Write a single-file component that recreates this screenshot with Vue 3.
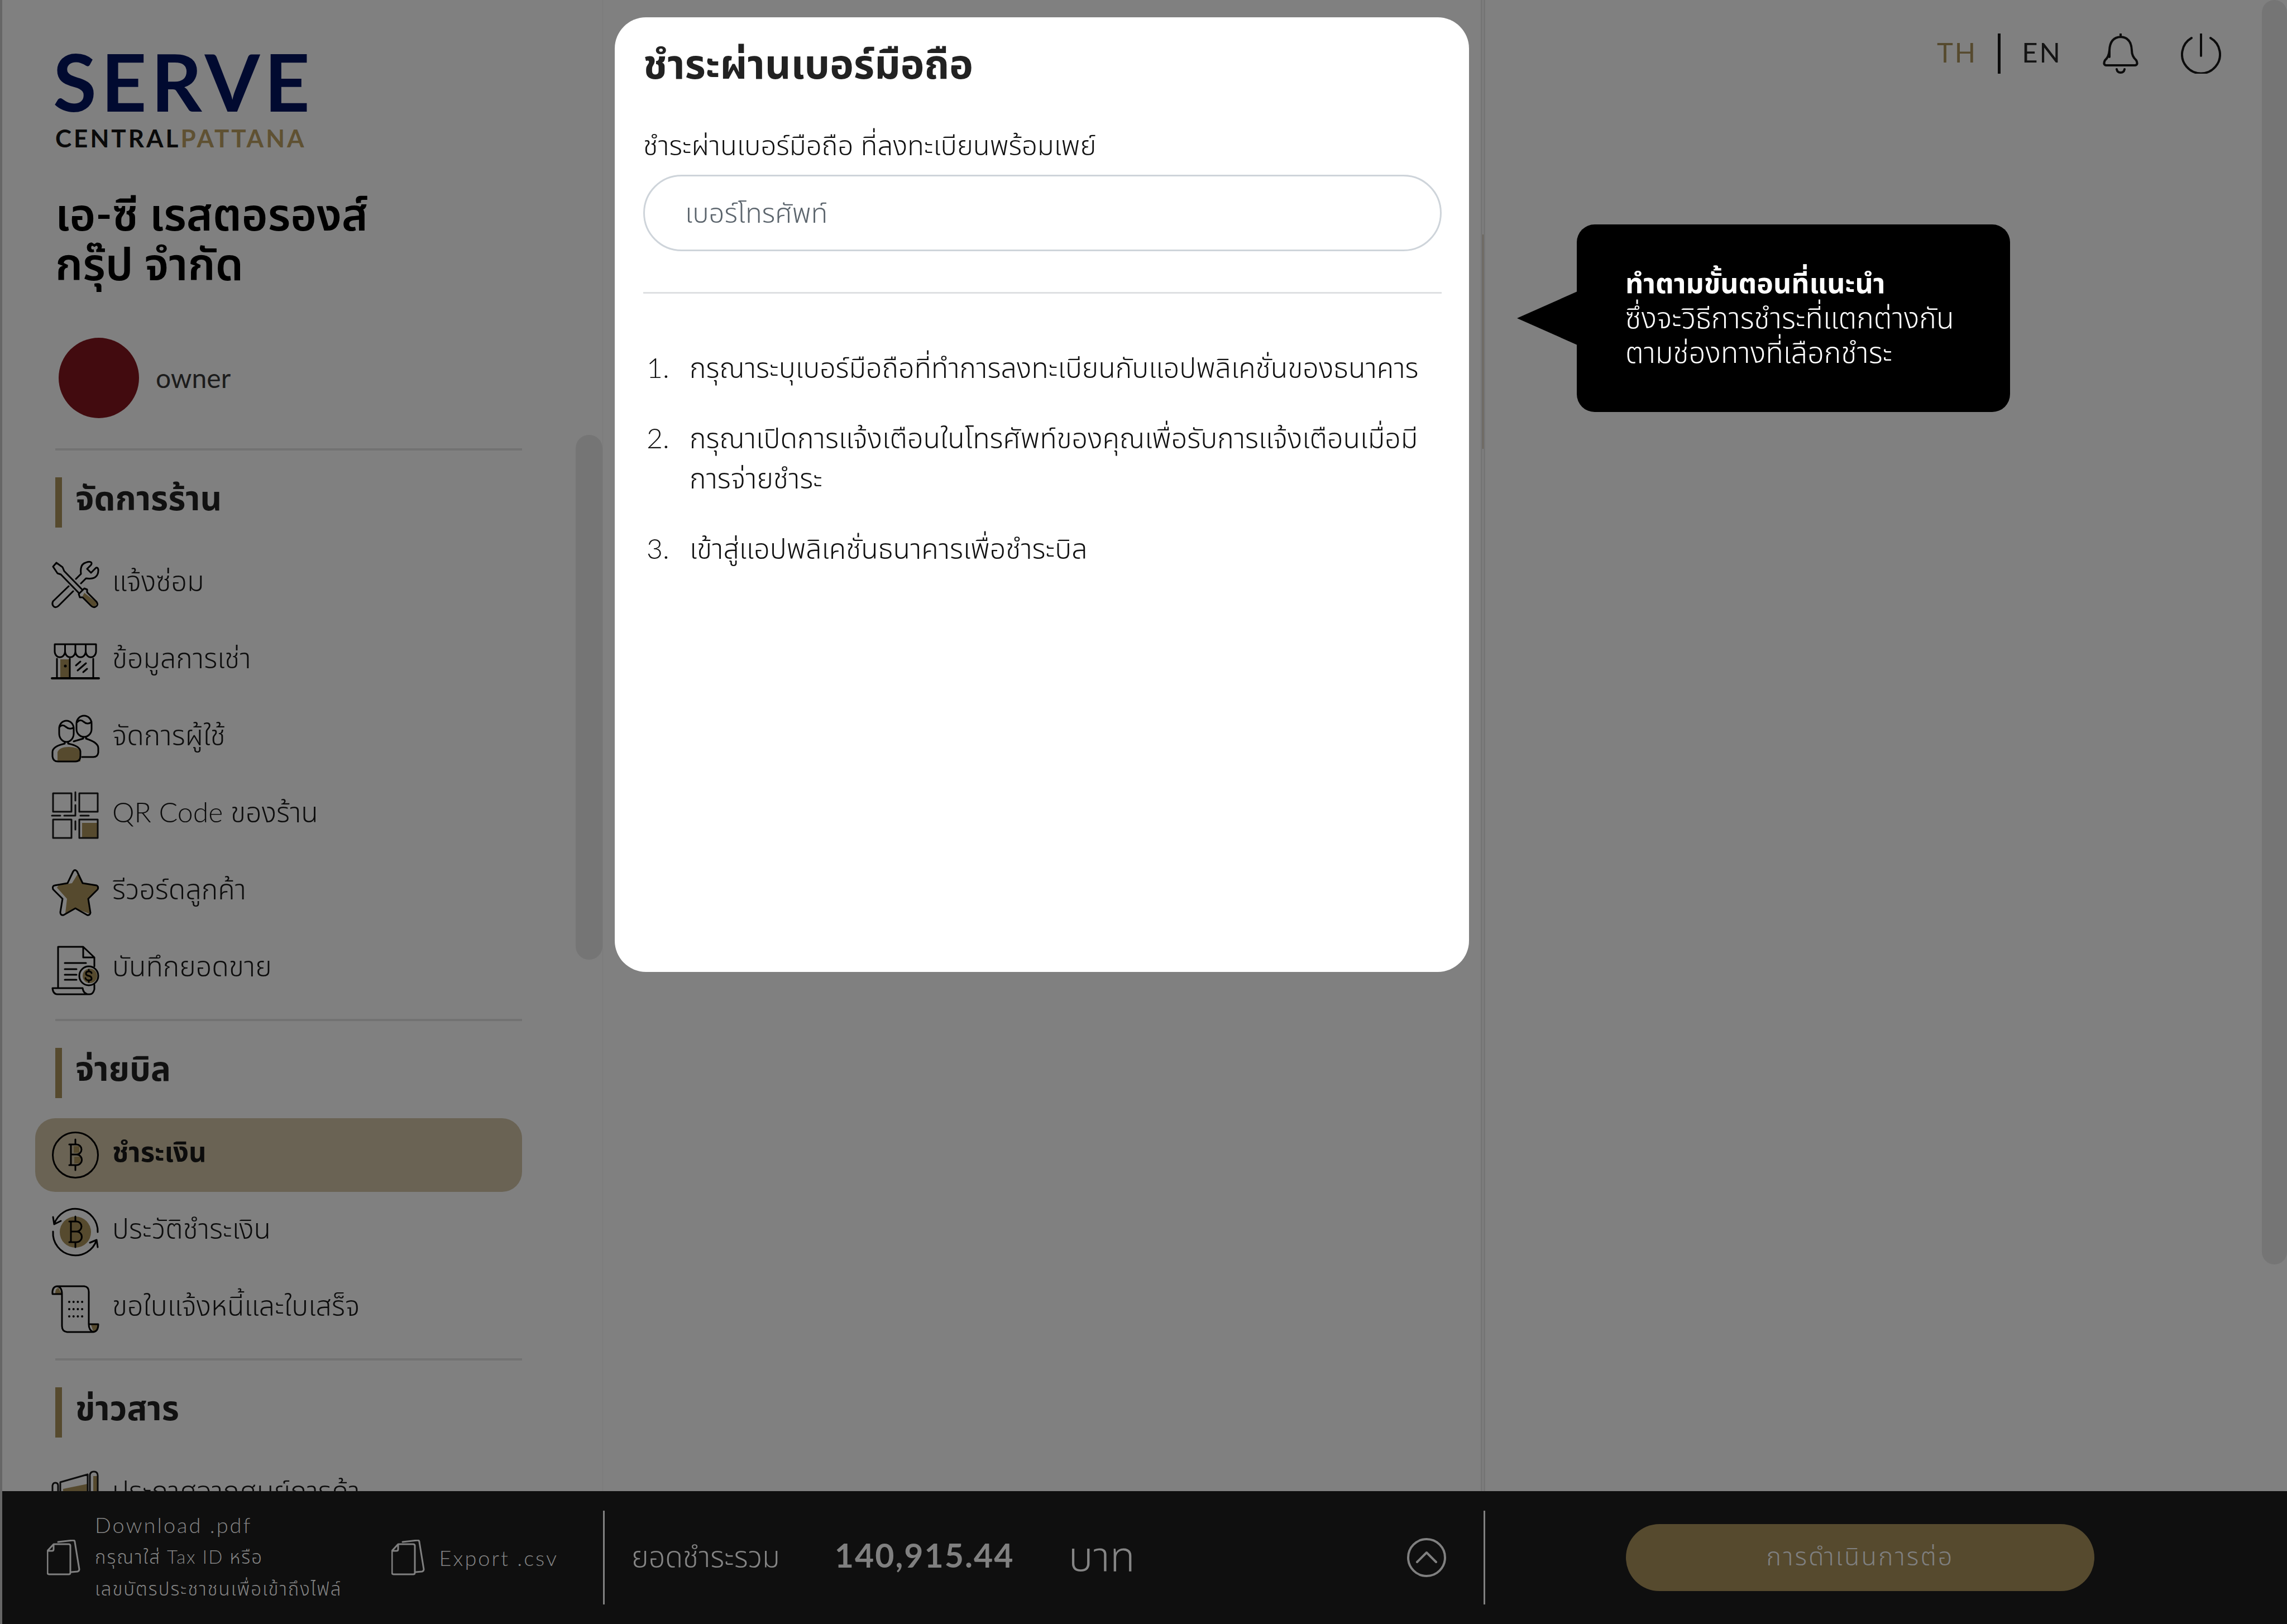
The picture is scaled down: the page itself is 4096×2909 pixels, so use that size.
<script setup>
import { ref } from 'vue'

const GOLD = '#564a2e'
const baht = `<path d="M34 23V60M31 23H44A9 9 0 0 1 44 41H35M44 41A9.500 9.500 0 0 1 44 60H31M42 14V23M42 60V69"/>`
const icons = {
  tools: `<path d="M58 57L80 74Q80 81 74 82L55 63Z" fill="${GOLD}" stroke="none"/>
    <path d="M43 32L52 23Q50 6 60 3Q66 0 70 2Q72 4 70 7L63 14L70 21L79 12Q82 11 83 15Q84 34 61 31L52 40M30 45L2 72Q-1 78 4 82Q8 84 12 80L38 54"/>
    <path d="M8 3L2 10L10 22L16 24L48 57M8 3L19 11L22 18L55 52M55 52L58 49L63 51L63 56L80 73Q84 79 78 82Q74 84 70 80L55 65L50 65L48 59Z"/>`,
  store: `<path d="M15 38H32V70H15Z" fill="${GOLD}" stroke="none"/>
    <path d="M5 11H79V24A9 10 0 0 1 60.500 24A9 10 0 0 1 42 24A9 10 0 0 1 23.500 24A9 10 0 0 1 5 24ZM23.500 11V24M42 11V24M60.500 11V24"/>
    <path d="M9 37V71M74 37V71M32 37V71M51 42L43 49M61 45L46 58M63 55L56 61"/>
    <path d="M0 72H84" stroke-width="4"/><circle cx="24" cy="50" r="2.500" fill="#000" stroke="none"/>`,
  users: `<path d="M10 82V66Q14 57 30 57Q46 57 51 64V83H14Z" fill="${GOLD}" stroke="none"/>
    <path d="M13 24A13 14 0 0 1 39 24V33A13 15 0 0 1 13 33ZM13 22Q18 15 25 21Q32 27 39 22M44 15A13.500 14 0 0 1 71 15V25A13.500 14 0 0 1 44 25ZM45 13Q50 6 57 12Q64 18 71 12"/>
    <path d="M23 48V51Q1 56 1 66V74Q2 83 11 83H42Q51 83 51 73V65Q50 55 29 51V48M39 47L56 42V39M61 39V42Q83 49 83 59V67Q82 75 74 75H54"/>`,
  qr: `<path d="M54 55H82V82H54Z" fill="${GOLD}" stroke="none"/>
    <path d="M2 2H35V35H2ZM49 2H82V35H49ZM2 49H35V82H2ZM49 49H82V82H49ZM42 0V15M42 23V42H22M0 42H15M51 42H66M42 52V67" stroke="#0c0c0c"/>`,
  star: `<path d="M46 9L55 25L81 29L82 34L64 53L68 80L41 70L24 79L27 53L9 33L12 29L36 25Z" fill="${GOLD}" stroke="none"/>
    <path d="M38 4Q41 -1 45 4L55 25L80 29Q84 31 82 36L65 53L69 78Q68 83 63 82L42 70L21 82Q15 83 15 77L19 53L2 36Q0 30 5 29L28 25Z"/>`,
  sales: `<path d="M76 36V20L56 1H11V74M56 1V20H76M76 69V77Q74 86 67 86H10Q2 86 1 75H55Q56 84 64 86M23 30H61M23 41H44M23 51H44M23 60H44"/>
    <circle cx="68" cy="53" r="13" fill="${GOLD}" stroke="none"/><circle cx="66" cy="53" r="17"/>
    <path d="M71 48Q70 45 66 45Q61 45 61 49Q61 52 66 53Q71 54 71 58Q71 61 66 61Q61 61 60 57M66 42V45M66 61V64"/>`,
  pay: `<path d="M39 26H49V38H39ZM40 45H51V57H40Z" fill="${GOLD}" stroke="none"/><circle cx="42" cy="42" r="40.500"/>${baht}`,
  history: `<circle cx="42" cy="42" r="28" fill="${GOLD}" stroke="none"/>${baht}
    <path d="M4 28A40 40 0 0 1 82 42M2 15L4 28L16 22M2 41A40 40 0 0 0 80 56M68 61L80 56L82 69"/>`,
  receipt: `<path d="M6 14Q6 4 12 4L17 14ZM70 70H82Q82 82 74 82Z" fill="${GOLD}" stroke="none"/>
    <path d="M9 1H58Q66 2 66 11V69H83Q83 82 74 83H27Q18 82 18 72V15H1Q0 2 9 1Q18 2 18 15M66 69Q66 80 74 83"/>
    <path d="M31 29H55M31 42H55M31 55H55" stroke-dasharray="0 7.700" stroke-width="4"/>`,
  news: `<path d="M20 32L64 23V84H20ZM74 9H82V84H74Z" fill="${GOLD}" stroke="none"/>
    <path d="M15 84V20L64 6V84M68 84V7Q69 1 75 1Q82 1 82 8V84M1 84V26Q2 21 6 21Q11 21 11 26V84" stroke="#0c0c0c"/>`,
}

const sections = [
  {
    title: 'จัดการร้าน',
    items: [
      { icon: 'tools', text: 'แจ้งซ่อม' },
      { icon: 'store', text: 'ข้อมูลการเช่า' },
      { icon: 'users', text: 'จัดการผู้ใช้' },
      { icon: 'qr', text: 'QR Code ของร้าน' },
      { icon: 'star', text: 'รีวอร์ดลูกค้า' },
      { icon: 'sales', text: 'บันทึกยอดขาย' },
    ],
  },
  {
    title: 'จ่ายบิล',
    items: [
      { icon: 'pay', text: 'ชำระเงิน', active: true },
      { icon: 'history', text: 'ประวัติชำระเงิน' },
      { icon: 'receipt', text: 'ขอใบแจ้งหนี้และใบเสร็จ' },
    ],
  },
  { title: 'ข่าวสาร', items: [{ icon: 'news', text: 'ประกาศจากศูนย์การค้า' }] },
]

const steps = [
  'กรุณาระบุเบอร์มือถือที่ทำการลงทะเบียนกับแอปพลิเคชั่นของธนาคาร',
  'กรุณาเปิดการแจ้งเตือนในโทรศัพท์ของคุณเพื่อรับการแจ้งเตือนเมื่อมีการจ่ายชำระ',
  'เข้าสู่แอปพลิเคชั่นธนาคารเพื่อชำระบิล',
]
const phone = ref('')
</script>

<template>
  <div class="app">
    <div class="body">
      <aside class="sidebar">
        <div class="brand">
          <div class="serve">SERVE</div>
          <div class="central">CENTRAL<span>PATTANA</span></div>
        </div>
        <h1 class="company">เอ-ซี เรสตอรองส์<br>กรุ๊ป จำกัด</h1>
        <div class="user"><span class="avatar"></span><span>owner</span></div>
        <nav>
          <section v-for="s in sections" :key="s.title" class="section">
            <h2>{{ s.title }}</h2>
            <ul>
              <li v-for="item in s.items" :key="item.text">
                <a href="#" class="item" :class="{ active: item.active }">
                  <svg viewBox="0 0 84 84" v-html="icons[item.icon]"></svg>
                  <span>{{ item.text }}</span>
                </a>
              </li>
            </ul>
          </section>
        </nav>
        <div class="thumb side-thumb"></div>
      </aside>

      <main class="content">
        <section class="card">
          <h2>ชำระผ่านเบอร์มือถือ</h2>
          <label for="phone">ชำระผ่านเบอร์มือถือ ที่ลงทะเบียนพร้อมเพย์</label>
          <input id="phone" v-model="phone" type="tel" placeholder="เบอร์โทรศัพท์">
          <hr>
          <ol>
            <li v-for="(step, i) in steps" :key="i"><span>{{ i + 1 }}.</span><span>{{ step }}</span></li>
          </ol>
        </section>
      </main>

      <aside class="right">
        <header class="top">
          <a href="#" class="on">TH</a>
          <span class="bar"></span>
          <a href="#">EN</a>
          <button type="button" aria-label="การแจ้งเตือน" class="bell">
            <svg viewBox="0 0 64 72"><path d="M32 1V6M12 42V30Q13 7 32 6Q51 7 52 30Q52 41 60 48Q64 56 58 57H6Q0 56 4 48Q11 42 12 30M25 64Q26 70 32 70Q38 70 39 64" /></svg>
          </button>
          <button type="button" aria-label="ออกจากระบบ" class="power">
            <svg viewBox="0 0 72 72"><path d="M36 1V40M19 8A34 34 0 1 0 53 8" /></svg>
          </button>
        </header>
        <div class="tip">
          <strong>ทำตามขั้นตอนที่แนะนำ</strong>
          <p>ซึ่งจะวิธีการชำระที่แตกต่างกัน<br>ตามช่องทางที่เลือกชำระ</p>
        </div>
        <div class="thumb page-thumb"></div>
      </aside>
    </div>

    <footer class="footer">
      <div class="files">
        <button type="button" class="file">
          <svg viewBox="0 0 60 64"><path d="M12 8H39Q42 8 42 11V59Q42 62 39 62H4Q1 62 1 59V20ZM12 8V17Q12 20 9 20H1M20 4L47 1Q50 1 50 4L58 53Q58 56 55 57L44 58" /></svg>
          <span class="lines"><span class="big">Download .pdf</span><small>กรุณาใส่ Tax ID หรือ</small><small>เลขบัตรประชาชนเพื่อเข้าถึงไฟล์</small></span>
        </button>
        <button type="button" class="file">
          <svg viewBox="0 0 60 64"><path d="M12 8H39Q42 8 42 11V59Q42 62 39 62H4Q1 62 1 59V20ZM12 8V17Q12 20 9 20H1M20 4L47 1Q50 1 50 4L58 53Q58 56 55 57L44 58" /></svg>
          <span class="big">Export .csv</span>
        </button>
      </div>
      <div class="total">
        <span class="label">ยอดชำระรวม</span>
        <strong>140,915.44</strong>
        <span class="baht">บาท</span>
        <button type="button" aria-label="รายละเอียด" class="expand">
          <svg viewBox="0 0 70 70"><circle cx="35" cy="35" r="33" /><path d="M18 43L35 26L52 43" /></svg>
        </button>
      </div>
      <div class="action"><button type="button" class="next">การดำเนินการต่อ</button></div>
    </footer>
  </div>
</template>

<style>
body { margin: 0; background: #808080; }
</style>

<style scoped>
* { box-sizing: border-box; }
.app {
  height: 100vh;
  display: flex;
  flex-direction: column;
  border-left: 4px solid #666;
  background: #808080;
  color: #0c0c0c;
  font-family: Lato, "Noto Sans Thai", "Noto Sans", sans-serif;
  font-size: 50px;
  font-weight: 300;
}
h1, h2, p, ul, ol { margin: 0; padding: 0; }
ul, ol { list-style: none; }
a { color: inherit; text-decoration: none; }
button { padding: 0; border: 0; background: none; color: inherit; font: inherit; cursor: pointer; }
svg { display: block; flex: none; fill: none; stroke: #000; stroke-width: 3; stroke-linecap: round; stroke-linejoin: round; }

.body, .footer { display: grid; grid-template-columns: 1076fr 1580fr 1436fr; }
.body { flex: 1; min-height: 0; }
.sidebar { position: relative; min-height: 0; overflow: hidden; padding: 74px 144px 0 95px; border-right: 1px solid #7a7a7a; }
.serve { margin-left: -4px; color: #010a30; font-size: 142px; font-weight: 700; line-height: 142px; letter-spacing: 8px; }
.central { color: #0a0a0a; font-size: 44px; font-weight: 700; line-height: 62px; letter-spacing: 4px; }
.central span { color: #5f5132; }
.company { margin-top: 60px; height: 178px; color: #000; font-size: 80px; line-height: 89px; font-weight: 600; white-space: nowrap; }
.user { display: flex; align-items: center; gap: 30px; height: 144px; margin: 89px 0 54px 6px; font-size: 48px; line-height: 60px; font-weight: 400; color: #1c1c1c; }
.avatar { width: 144px; height: 144px; border-radius: 50%; background: #420b0f; }
.section { padding: 48px 0 22px; border-top: 4px solid #727272; }
.section h2 { height: 90px; margin-bottom: 36px; padding-left: 24px; border-left: 12px solid #564a2e; font-size: 60px; line-height: 72px; font-weight: 700; color: #111; }
.section ul { display: grid; gap: 6px; }
.item { display: flex; align-items: center; gap: 24px; height: 132px; margin-left: -36px; padding-left: 30px; border-radius: 36px; white-space: nowrap; }
.item svg { width: 84px; height: 84px; overflow: visible; }
.item span { padding-bottom: 6px; }
.active { background: #6a6354; font-size: 49px; font-weight: 700; }
.thumb { position: absolute; right: 0; background: #757575; border-radius: 24px; }
.side-thumb { top: 779px; width: 48px; height: 940px; }

.content { position: relative; padding: 31px 21px 0; border-right: 8px double #757575; }
.content::after { content: ""; position: absolute; top: 420px; right: -5px; width: 2px; height: 384px; background: #6c665c; }
.card { min-height: 1710px; padding: 34px 49px 36px 51px; border-radius: 56px; background: #fff; color: #111; }
.card h2 { font-size: 72px; line-height: 96px; font-weight: 700; color: #222; }
.card label { display: block; margin-top: 62px; font-size: 49px; line-height: 72px; }
.card input { display: block; width: 100%; height: 137px; margin-top: 18px; padding: 0 72px 4px; border: 3px solid #ced4da; border-radius: 69px; background: #fff; font: inherit; font-size: 49px; color: #222; outline: 0; }
.card input::placeholder { color: #5c656d; opacity: 1; }
.card hr { height: 3px; margin: 73px 0 96px; border: 0; background: #dee0e2; }
.card ol { display: grid; gap: 54px; padding-left: 6px; line-height: 72px; }
.card li { display: grid; grid-template-columns: 77px 1fr; }

.right { position: relative; }
.top { display: flex; align-items: center; height: 72px; margin: 60px 118px 0 0; justify-content: flex-end; font-size: 49px; line-height: 64px; font-weight: 400; letter-spacing: 3px; color: #141414; }
.top a { padding-bottom: 6px; }
.top .on { color: #564a2e; }
.bar { width: 5px; height: 72px; margin: 0 38px 0 37px; background: #0c0c0c; }
.top svg { stroke: #0c0c0c; stroke-width: 4; }
.bell { margin-left: 73px; }
.bell svg { width: 64px; height: 72px; }
.power { margin-left: 76px; }
.power svg { width: 72px; height: 72px; }
.tip { position: absolute; top: 402px; left: 164px; padding: 72px 87px; width: 776px; height: 336px; border-radius: 32px; background: #000; color: #fff; font-size: 52px; line-height: 62px; white-space: nowrap; }
.tip strong { font-size: 50px; font-weight: 700; }
.tip::before { content: ""; position: absolute; left: -107px; top: 120px; border: solid transparent; border-width: 48px 108px 48px 0; border-right-color: #000; }
.page-thumb { top: 0; width: 45px; height: 2265px; }

.footer { height: 238px; background: #0f0f0f; color: #858585; }
.footer svg { stroke: #808080; }
.files { display: flex; align-items: center; padding-left: 80px; gap: 88px; }
.file { display: flex; align-items: center; gap: 26px; text-align: left; white-space: nowrap; }
.file svg { width: 60px; height: 64px; }
.lines { display: grid; padding-bottom: 3px; }
.lines small { font-size: 33px; line-height: 57px; letter-spacing: 2px; }
.big { font-size: 38px; line-height: 57px; letter-spacing: 3px; }
.total { display: flex; align-items: center; align-self: center; height: 168px; padding: 0 67px 0 48px; border: solid #808080; border-width: 0 3px; line-height: 80px; }
.label { padding-bottom: 6px; font-size: 52px; }
.total strong { margin-left: 98px; padding-bottom: 8px; color: #808080; font-size: 59px; font-weight: 700; letter-spacing: 2px; }
.baht { margin-left: 97px; padding-bottom: 8px; font-size: 74px; }
.expand { margin-left: auto; }
.expand svg { width: 70px; height: 70px; stroke-width: 4; }
.action { display: flex; align-items: center; justify-content: center; padding-right: 93px; }
.next { width: 839px; height: 120px; border-radius: 60px; background: #564a2e; color: #808080; font-size: 45px; letter-spacing: 3px; }
</style>
